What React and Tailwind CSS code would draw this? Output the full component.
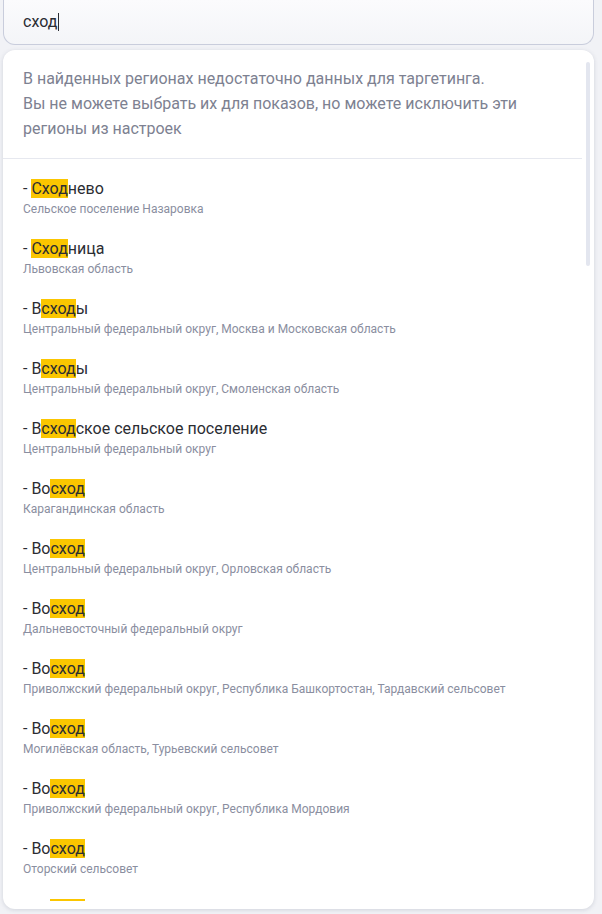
import React from "react";

const items = [
  { pre: "- ", hl: "Сход", post: "нево", sub: "Сельское поселение Назаровка" },
  { pre: "- ", hl: "Сход", post: "ница", sub: "Львовская область" },
  { pre: "- В", hl: "сход", post: "ы", sub: "Центральный федеральный округ, Москва и Московская область" },
  { pre: "- В", hl: "сход", post: "ы", sub: "Центральный федеральный округ, Смоленская область" },
  { pre: "- В", hl: "сход", post: "ское сельское поселение", sub: "Центральный федеральный округ" },
  { pre: "- Во", hl: "сход", post: "", sub: "Карагандинская область" },
  { pre: "- Во", hl: "сход", post: "", sub: "Центральный федеральный округ, Орловская область" },
  { pre: "- Во", hl: "сход", post: "", sub: "Дальневосточный федеральный округ" },
  { pre: "- Во", hl: "сход", post: "", sub: "Приволжский федеральный округ, Республика Башкортостан, Тардавский сельсовет" },
  { pre: "- Во", hl: "сход", post: "", sub: "Могилёвская область, Турьевский сельсовет" },
  { pre: "- Во", hl: "сход", post: "", sub: "Приволжский федеральный округ, Республика Мордовия" },
  { pre: "- Во", hl: "сход", post: "", sub: "Оторский сельсовет" },
  { pre: "- Во", hl: "сход", post: "", sub: "Новосибирская область" },
];

export default function App() {
  return (
    <div
      className="w-[602px] h-[914px] overflow-hidden bg-[#f1f2f6] flex flex-col"
      style={{ fontFamily: "Roboto, 'Noto Sans', sans-serif" }}
    >
      <div className="mx-[3px] w-[591px] h-[45px] shrink-0 rounded-b-[12px] border-x border-b border-[#c9cddc] bg-gradient-to-b from-[#fbfbfd] to-[#f4f5f8] flex items-center px-[19px]">
        <span className="text-[16px] leading-[20px] text-[#2b2d33]">сход</span>
        <span className="w-px h-[18px] bg-[#2b2d33] ml-px"></span>
      </div>
      <div className="mt-[5px] mx-[3px] w-[591px] h-[859px] shrink-0 rounded-[12px] bg-white shadow-[0_1px_4px_rgba(60,70,100,0.18)] pb-[8px] relative flex flex-col">
        <div className="absolute right-[4px] top-[12px] w-[4px] h-[204px] rounded-full bg-[#e3e6ef]"></div>
        <div className="flex-1 overflow-hidden flex flex-col">
          <div className="px-[20px] pt-[16px] pb-[17px] text-[16px] leading-[25px] text-[#7d8191] w-[579px] border-b border-[#e6e8ef]">
            В найденных регионах недостаточно данных для таргетинга.
            <br />
            Вы не можете выбрать их для показов, но можете исключить эти регионы из настроек
          </div>
          <div className="pt-[10px] flex flex-col">
            {items.map((it, i) => (
              <div key={i} className="px-[20px] pt-[10px] pb-[12px] flex flex-col gap-[2px] shrink-0">
                <div className="text-[16px] leading-[20px] text-[#2b2d33] whitespace-nowrap">
                  {it.pre}
                  <span className="bg-[#fbc600]">{it.hl}</span>
                  {it.post}
                </div>
                <div className="text-[12px] leading-[16px] text-[#8a8ea0] whitespace-nowrap">{it.sub}</div>
              </div>
            ))}
          </div>
        </div>
      </div>
    </div>
  );
}
